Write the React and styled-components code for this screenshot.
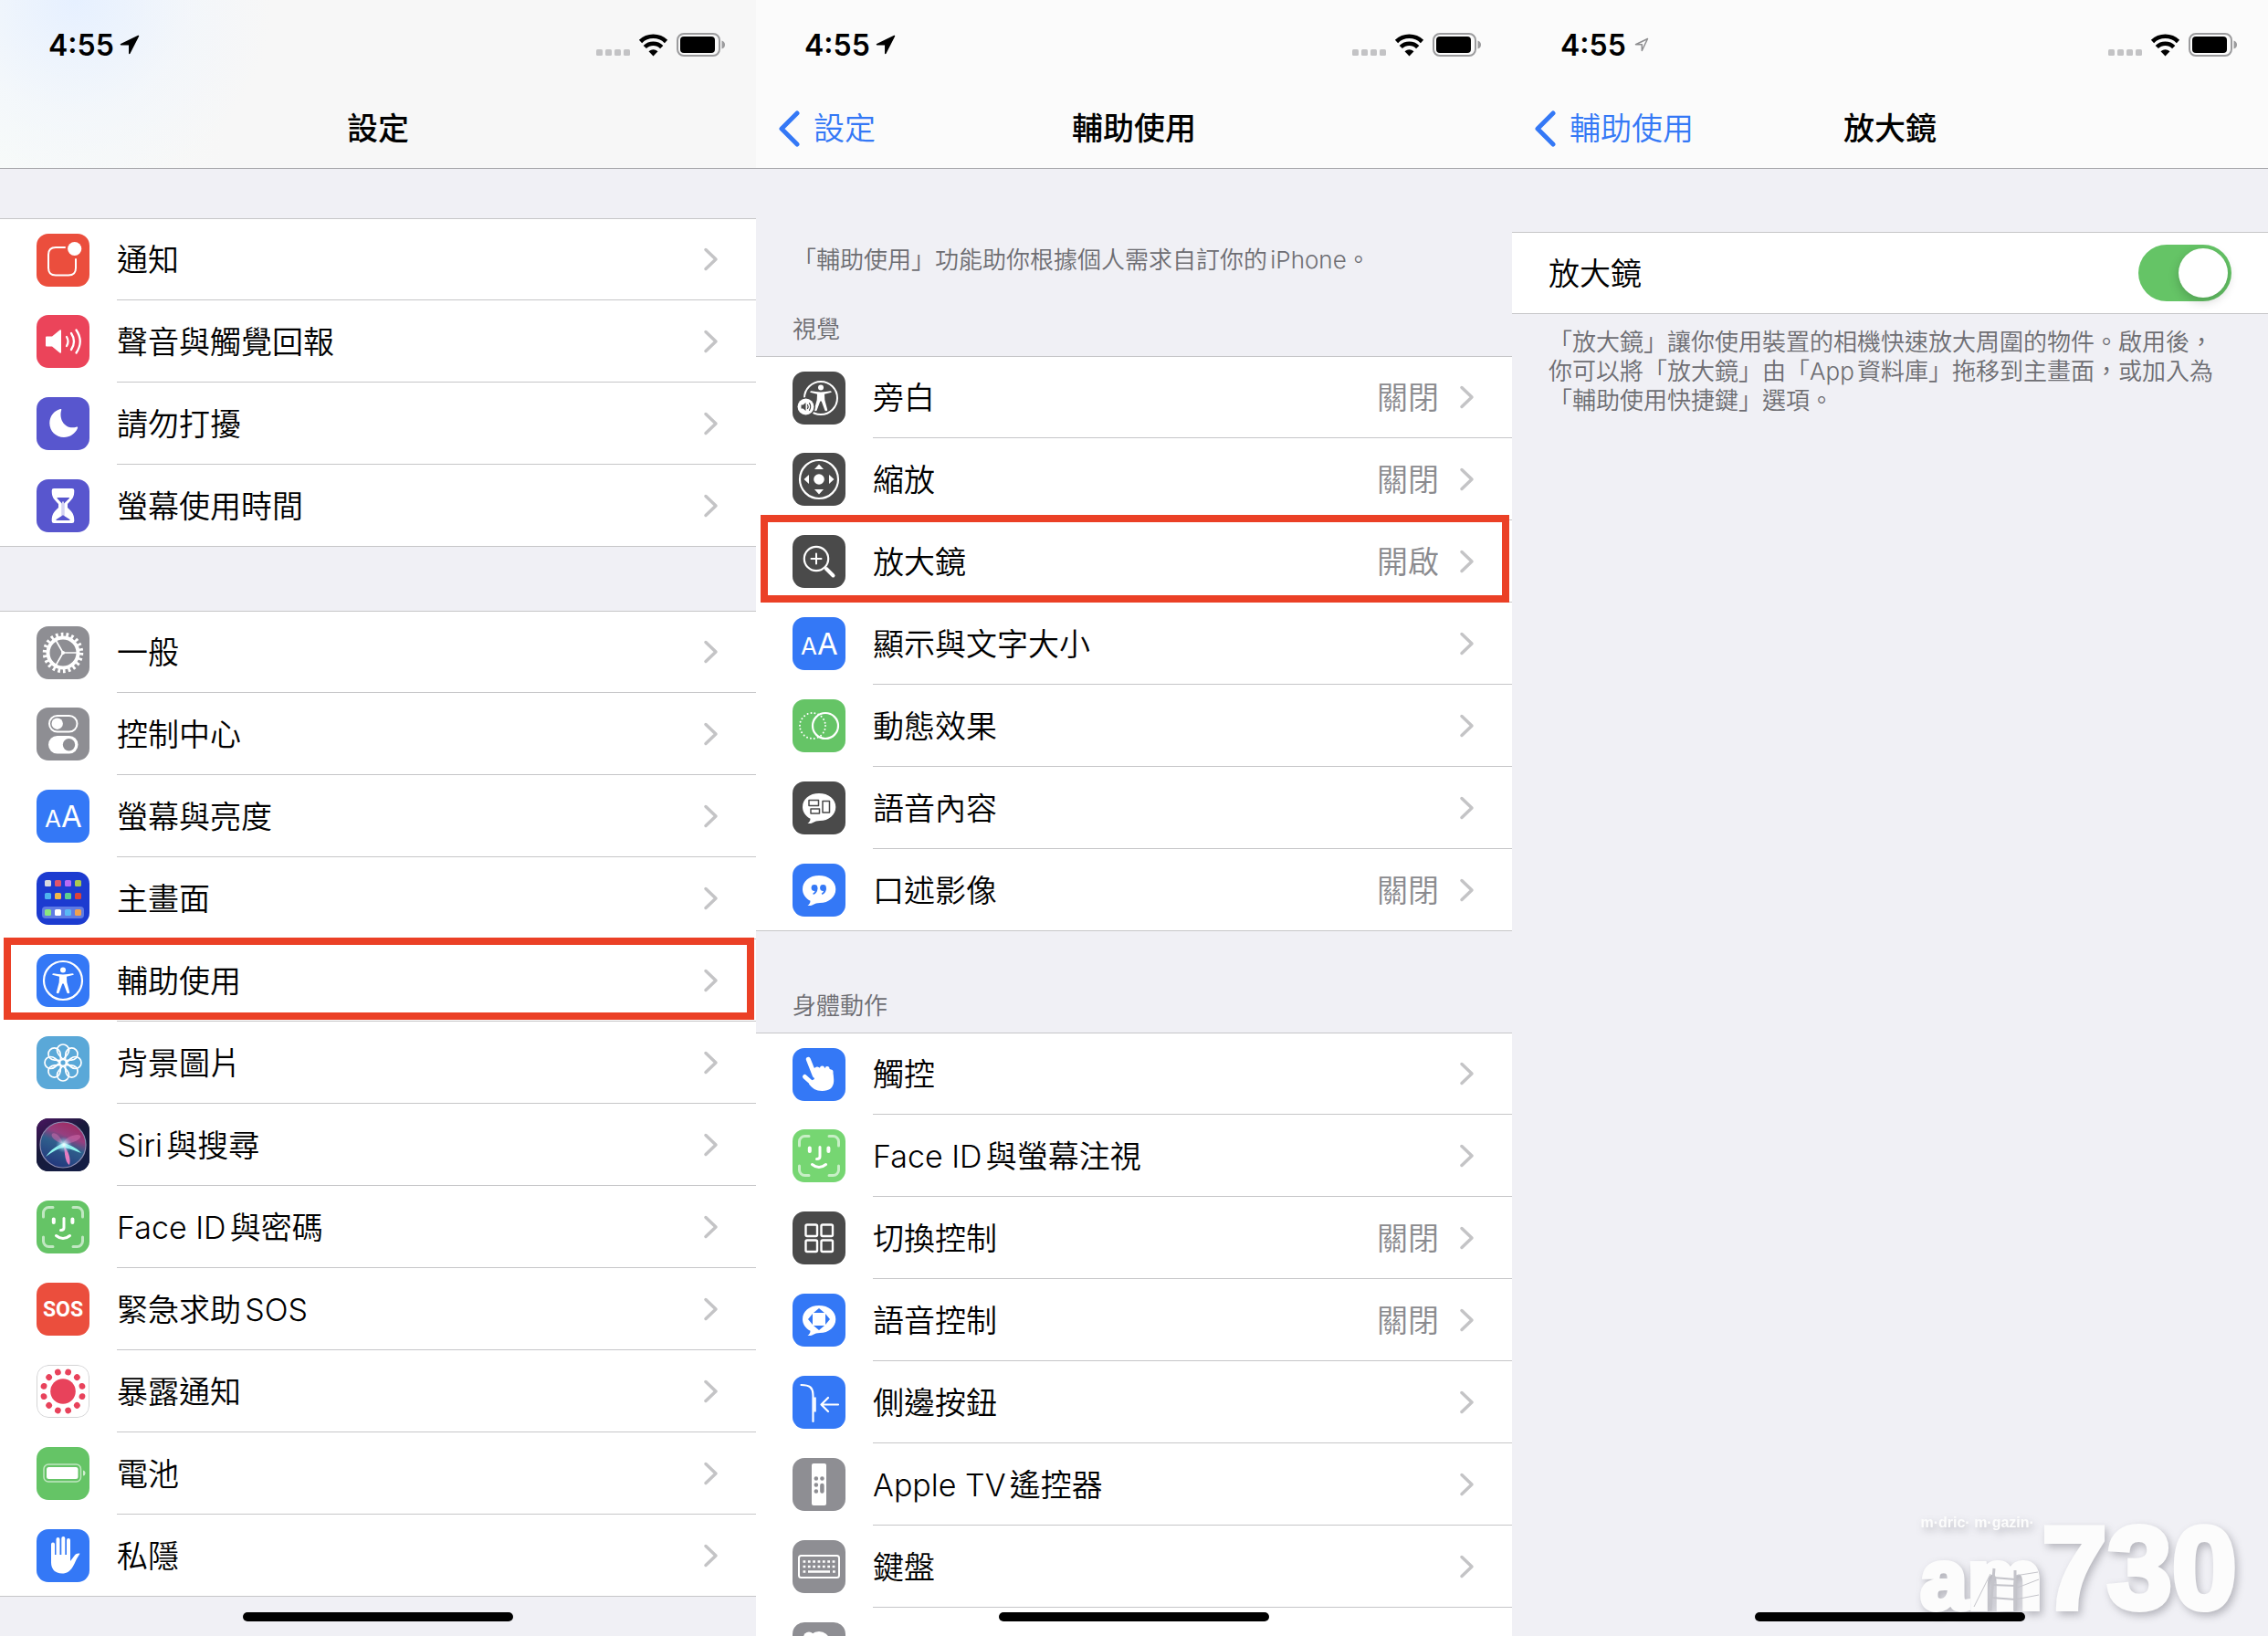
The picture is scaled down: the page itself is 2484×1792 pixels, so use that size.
import { useState } from 'react';
import styled, { createGlobalStyle } from 'styled-components';

const GlobalStyle = createGlobalStyle`
  * {
    box-sizing: border-box;
  }
  body {
    margin: 0;
    background: #f0f0f5;
    font-family: Inter, 'Noto Sans CJK TC', sans-serif;
    font-size: 34px;
    font-weight: 350;
    color: #000;
    text-autospace: normal;
  }
`;

const Screens = styled.main`
  display: grid;
  grid-template-columns: repeat(3, minmax(0, 1fr));
  height: 100vh;
`;

const Screen = styled.section`
  position: relative;
  overflow: hidden;
  background: #f0f0f5;
`;

const Header = styled.header`
  border-bottom: 1px solid #a6a6aa;
  background: ${({ $tinted }) =>
    $tinted
      ? 'radial-gradient(circle at 10% 0, #e6f0ff 0, rgba(240, 245, 252, 0.6) 16%, transparent 28%), linear-gradient(90deg, #f8fbf9, #f7f7f7 30%)'
      : '#fbfbfb'};
`;

const StatusBar = styled.div`
  display: flex;
  align-items: center;
  justify-content: space-between;
  height: 98px;
  padding: 0 33px 0 53px;
`;

const StatusGroup = styled.div`
  display: flex;
  align-items: center;
  gap: ${({ $gap }) => $gap}px;
`;

const Time = styled.time`
  font-size: 32px;
  font-weight: 600;
`;

const NavBar = styled.nav`
  display: grid;
  grid-template-columns: 1fr auto 1fr;
  align-items: center;
  height: 86px;
  padding: 0 24px;
`;

const BackLink = styled.a`
  display: flex;
  align-items: center;
  gap: 13px;
  height: 48px;
  line-height: 46px;
  color: #3478f6;
  text-decoration: none;
`;

const Title = styled.h1`
  grid-column: 2;
  margin: 0;
  font-size: 34px;
  font-weight: 500;
  line-height: 48px;
`;

const Note = styled.p`
  margin: 0;
  padding: ${({ $top }) => $top}px 40px 0;
  font-size: 26px;
  line-height: 32px;
  color: #6d6d72;
`;

const GroupTitle = styled.h2`
  margin: 0;
  padding: ${({ $top }) => $top}px 40px 13px;
  font-size: 26px;
  font-weight: 350;
  line-height: 32px;
  color: #6d6d72;
`;

const List = styled.ul`
  margin: ${({ $top }) => $top || 0}px 0 0;
  padding: 0;
  list-style: none;
  background: #fff;
  border-top: 1px solid #c6c6c8;
`;

const Item = styled.li`
  position: relative;
  height: 90px;

  &:first-child {
    height: 89px;
  }
  &:last-child {
    border-bottom: 1px solid #c6c6c8;
  }
`;

const RowLink = styled.a`
  display: flex;
  align-items: center;
  height: 100%;
  padding-left: 40px;
  color: inherit;
  text-decoration: none;
`;

const Tile = styled.svg`
  flex: none;
  width: 58px;
  height: 58px;
  margin-right: 30px;
  border-radius: 13px;
  background: ${({ $bg }) => $bg};
  fill: none;
  stroke-linecap: round;
  stroke-linejoin: round;
`;

const RowBody = styled.div`
  display: flex;
  flex: 1;
  align-items: center;
  height: 100%;
  padding-right: 41px;
  border-bottom: 1px solid #c6c6c8;

  ${Item}:last-child & {
    border-bottom: 0;
  }
`;

const RowLabel = styled.span`
  flex: 1;
  padding-top: 2px;
  line-height: 48px;
`;

const RowValue = styled.span`
  margin-right: 22px;
  padding-top: 2px;
  line-height: 48px;
  color: #8a8a8e;
`;

// hand-drawn style frame laid over the row to tap
const Marker = styled.span`
  position: absolute;
  inset: ${({ $wide }) => ($wide ? '-6px 3px 0 5px' : '-2px 2px 2px 4px')};
  z-index: 1;
  border: 8px solid #eb4026;
  pointer-events: none;
`;

const SwitchRow = styled.div`
  display: flex;
  align-items: center;
  justify-content: space-between;
  height: 90px;
  margin-top: 69px;
  padding: 0 40px;
  line-height: 48px;
  background: #fff;
  border: solid #c6c6c8;
  border-width: 1px 0;
`;

const SwitchLabel = styled.label`
  padding-top: 2px;
`;

const Switch = styled.input`
  appearance: none;
  width: 102px;
  height: 62px;
  margin: 0;
  padding: 4px;
  border-radius: 31px;
  background: ${({ checked }) => (checked ? '#65c466' : '#e9e9eb')};
  cursor: pointer;

  &::before {
    content: '';
    display: block;
    width: 54px;
    height: 54px;
    margin-left: ${({ checked }) => (checked ? '40px' : '0')};
    border-radius: 50%;
    background: #fff;
    box-shadow: 0 4px 12px rgba(0, 0, 0, 0.2);
  }
`;

const HomeIndicator = styled.span`
  position: absolute;
  left: 50%;
  bottom: 16px;
  width: 296px;
  height: 10px;
  margin-left: -148px;
  border-radius: 5px;
  background: #000;
`;

const Watermark = styled.div`
  position: absolute;
  right: 34px;
  bottom: 10px;
  display: flex;
  align-items: last baseline;
  font-family: 'Liberation Sans', sans-serif;
  font-weight: 700;
  color: #fcfcfc;
  -webkit-text-stroke: 6px #fcfcfc;
  filter: drop-shadow(3px 4px 4px rgba(60, 60, 70, 0.32));
`;

const WatermarkName = styled.div`
  position: relative;
  display: flex;
  flex-direction: column;
  font-size: 92px;
  line-height: 104px;
`;

const WatermarkNumber = styled.div`
  font-size: 128px;
  line-height: 128px;
`;

const Tagline = styled.small`
  font-size: 16px;
  line-height: 20px;
  white-space: nowrap;
  -webkit-text-stroke: 0;
`;

const Ladder = styled.svg`
  position: absolute;
  left: 51px;
  bottom: 18px;
  width: 82px;
  height: 52px;
  fill: none;
  stroke: #c4c4ca;
`;

const faceId = (
  <g stroke="#fff">
    <g strokeWidth="3" opacity=".6">
      <path d="M7.500 18v-4.500a6 6 0 0 1 6-6H18M40 7.500h4.500a6 6 0 0 1 6 6V18M50.500 40v4.500a6 6 0 0 1-6 6H40M18 50.500h-4.500a6 6 0 0 1-6-6V40" />
    </g>
    <path strokeWidth="4" d="M18.800 20.500v3.500M39.400 20.500v3.500" />
    <path strokeWidth="3" d="M30 19.500v10.500q0 2.500-3.500 2.500M21.500 38.500q7.500 6 15 0" />
  </g>
);

const textSize = (
  <g fill="#fff" fontFamily="Inter, sans-serif" fontWeight="400">
    <text x="9" y="41" fontSize="26">A</text>
    <text x="27" y="41" fontSize="33">A</text>
  </g>
);

const person = (
  <g fill="#fff">
    <circle cx="29" cy="17.500" r="3" />
    <path d="M18.500 21.300q10.500 2.200 21 0 1.500 0 1.200 1.500l-7.700 2 .3 6.200 3 11.300q-1.200 1.600-2.800.5L29.700 32.500h-1.400l-3.800 10.300q-1.600 1.100-2.800-.5l3-11.300.3-6.200-7.700-2q-.3-1.500 1.200-1.500z" />
  </g>
);

const bubble = (
  <path
    fill="#fff"
    d="M29 13c10.500 0 18.300 6.300 18.300 15S39.500 43 30 43c-3.500 0-5 .8-8 2.200-1.700.8-3.500 1-5.500.8 1.800-1.200 3-2.800 3-5.200C14.500 38 11 33.500 11 28c0-8.700 7.500-15 18-15z"
  />
);

const homeColors = [
  ['#d9d9de', '#e0556b', '#b66bf5', '#a9c94f'],
  ['#4fb3ee', '#f2b84a', '#5fd08f', '#dd4338'],
  ['#8be67f', '#ffffff', '#5ab9f5', '#f0a04e'],
];

const glyphs = {
  notifications: (
    <>
      <path
        stroke="#fff"
        strokeWidth="2"
        d="M31 15H21q-8 0-8 8v14.500q0 8 8 8h14q8 0 8-8V28"
      />
      <circle cx="41.700" cy="16.500" r="7.600" fill="#fff" />
    </>
  ),
  sound: (
    <>
      <path fill="#fff" d="M11 23.500h6l8.500-7q1.500-1 1.500.8v23.400q0 1.800-1.500.8l-8.500-7h-6q-1 0-1-1v-9q0-1 1-1z" />
      <path stroke="#fff" strokeWidth="2.300" d="M33 24q3 5 0 10M38 20q6 9 0 18M43.500 16.500q8.500 12.500 0 25" />
    </>
  ),
  moon: (
    <path
      fill="#fff"
      d="M26 13c1-.3 1.500.3 1.200 1.200C24 25 32 36 43.500 32.700c1.300-.4 2 .2 1.500 1.300C42.500 40 36.500 44 30 44c-9 0-15.700-7-15.700-15.500C14.300 21 19 15 26 13z"
    />
  ),
  hourglass: (
    <>
      <path
        fill="#fff"
        d="M19 10h20q2.300 0 2.300 2.300c0 8-2.300 9.500-7.300 14.700v4c5 5.200 7.300 6.700 7.300 14.700Q41.300 48 39 48H19q-2.300 0-2.300-2.300c0-8 2.300-9.500 7.300-14.700v-4c-5-5.200-7.300-6.700-7.300-14.700Q16.700 10 19 10z"
      />
      <path
        fill="#5856ce"
        d="M23 20h12.500q1 0 .3 1l-5.600 5.500v13.500l6.300 4q.5 1-.5 1H22q-1 0-.5-1l6.300-4V26.500L22.700 21q-.7-1 .3-1z"
      />
      <path stroke="#fff" strokeWidth="1.500" d="M29 25v14" />
    </>
  ),
  gear: (
    <g stroke="#fff" strokeLinecap="butt">
      <circle cx="29" cy="29" r="16.500" strokeWidth="4" />
      <circle cx="29" cy="29" r="20" strokeWidth="4.500" strokeDasharray="2.700 3.010" />
      <path strokeWidth="1.700" d="M29 29h15M29 29l-8-14M29 29l-8 14" />
      <circle cx="29" cy="29" r="2" fill="#fff" stroke="none" />
    </g>
  ),
  toggles: (
    <>
      <rect x="14" y="9" width="30.500" height="17.500" rx="8.700" stroke="#fff" strokeWidth="2" />
      <circle cx="22.700" cy="17.700" r="6.200" fill="#fff" />
      <rect x="13" y="31" width="32.500" height="19.500" rx="9.700" fill="#fff" />
      <circle cx="35.500" cy="40.700" r="6.700" fill="#8e8e93" />
    </>
  ),
  textSize,
  home: (
    <>
      <rect x="6" y="38" width="46" height="13" rx="4" fill="#5f7be4" />
      {homeColors.map((row, r) =>
        row.map((color, c) => (
          <rect key={c} x={9 + c * 11} y={[9, 23, 41][r]} width="7" height="7" rx="1.500" fill={color} />
        ))
      )}
    </>
  ),
  accessibility: (
    <>
      <circle cx="29" cy="29" r="21" stroke="#fff" strokeWidth="2.200" />
      {person}
    </>
  ),
  flower: (
    <g stroke="#fff" strokeWidth="1.700">
      {[0, 45, 90, 135, 180, 225, 270, 315].map((a) => (
        <path
          key={a}
          transform={`rotate(${a} 29 29)`}
          d="M29 25.500L24.500 20.500C22.500 18 22.500 16.500 22.500 15.500a6.500 6.500 0 0 1 13 0c0 1 0 2.500-2 5z"
        />
      ))}
      <circle cx="29" cy="29" r="3.500" />
    </g>
  ),
  siri: (
    <>
      <defs>
        <linearGradient id="siriBack" x1="0" y1="0" x2=".6" y2="1">
          <stop offset="0" stopColor="#4a1560" />
          <stop offset=".5" stopColor="#171a3a" />
          <stop offset="1" stopColor="#141d44" />
        </linearGradient>
        <linearGradient id="siriOrb" x1=".7" y1="0" x2=".3" y2="1">
          <stop offset="0" stopColor="#a02a60" />
          <stop offset=".3" stopColor="#963f80" />
          <stop offset=".5" stopColor="#2f5f8c" />
          <stop offset="1" stopColor="#22357c" />
        </linearGradient>
        <radialGradient id="siriGlow">
          <stop offset="0" stopColor="#fff" />
          <stop offset=".4" stopColor="#b8f4ff" stopOpacity=".6" />
          <stop offset="1" stopColor="#7ad" stopOpacity="0" />
        </radialGradient>
      </defs>
      <rect width="58" height="58" fill="url(#siriBack)" />
      <circle cx="29" cy="29" r="25" fill="url(#siriOrb)" stroke="#8f8fb4" strokeWidth="1.200" />
      <path fill="#d56fb0" opacity=".5" d="M29 28C20 25 15 20 17 17s10 2 12 11c2-9 17-12 19-9s-8 9-19 9z" />
      <path fill="#8ff3ee" d="M10 42c6-8 12-12 20-15 6 2 14 5 19 11-8-3-13-5-19-6-7 1-13 5-20 10z" />
      <path fill="#e67cc0" d="M30 30c5 6 8 14 6 21-5-3-5-13-6-21z" />
      <circle cx="30" cy="29" r="9" fill="url(#siriGlow)" />
    </>
  ),
  faceId,
  sos: (
    <text x="29" y="37" fill="#fff" fontFamily="Roboto, sans-serif" fontSize="23" fontWeight="700" textAnchor="middle">
      SOS
    </text>
  ),
  exposure: (
    <g fill="#e8425b">
      <rect x=".5" y=".5" width="57" height="57" rx="12.500" fill="#fff" stroke="#d4d4d6" />
      <circle cx="29" cy="29" r="13.800" />
      {[...Array(12)].map((_, i) => (
        <circle key={i} cx="29" cy="7.300" r="3.400" transform={`rotate(${15 + i * 30} 29 29)`} />
      ))}
    </g>
  ),
  battery: (
    <>
      <rect x="8" y="19" width="40.500" height="19" rx="5" stroke="#fff" strokeWidth="1.500" opacity=".6" />
      <rect x="11" y="22" width="34.500" height="13" rx="2.500" fill="#fff" />
      <path fill="#fff" opacity=".7" d="M51 25.500q2.500.5 2.500 3t-2.500 3z" />
    </>
  ),
  hand: (
    <>
      <path stroke="#fff" strokeWidth="4" d="M18 16.500V32M23.500 11v20M29.300 10v20M35 12v20" />
      <path
        fill="#fff"
        d="M16 28h21v7l4.500-6c1.800-2.400 4-2.800 6-2.300L44 32.500c-1.800 3.500-2.500 6-4.500 9-3 4.800-6 7-11.500 7-8 0-12-5-12-12z"
      />
    </>
  ),
  voiceOver: (
    <>
      <circle cx="31" cy="29" r="18" stroke="#fff" strokeWidth="2" />
      <g transform="translate(2 0)">{person}</g>
      <circle cx="14.500" cy="38.500" r="10.500" fill="#4a4a4a" />
      <circle cx="14.500" cy="38.500" r="9" fill="#fff" />
      <path fill="#4a4a4a" d="M9.500 36.500h2l3-2.500v9l-3-2.500h-2z" />
      <path stroke="#4a4a4a" strokeWidth="1.200" d="M16.500 36.500q1.200 2 0 4M18.500 34.700q2.500 3.800 0 7.600" />
    </>
  ),
  zoom: (
    <>
      <circle cx="29" cy="29" r="21" stroke="#fff" strokeWidth="2.200" />
      <circle cx="29" cy="29" r="5.800" fill="#fff" />
      <path fill="#fff" d="M29 12.500l5 5.500H24zM29 45.500l5-5.500H24zM12.500 29l5.500-5v10zM45.500 29L40 24v10z" />
    </>
  ),
  magnifier: (
    <g stroke="#fff">
      <circle cx="26" cy="26" r="13.200" strokeWidth="2.200" />
      <path strokeWidth="2" d="M26 20.500v11M20.500 26h11" />
      <path strokeWidth="4" d="M37 37l7.500 7.500" />
    </g>
  ),
  motion: (
    <g stroke="#fff">
      <circle cx="36" cy="29" r="14" strokeWidth="2.200" />
      <circle cx="22" cy="29" r="14" strokeWidth="2" strokeDasharray="0 4" />
    </g>
  ),
  speech: (
    <>
      {bubble}
      <path stroke="#4a4a4a" strokeWidth="1.500" d="M18 20.500h10.500v6H18zM20 30h9.500v5H20zM33 21.500h7.500V34H33z" />
    </>
  ),
  quote: (
    <>
      {bubble}
      <g fill="#3478f6">
        <circle cx="24" cy="26.500" r="3.400" />
        <path d="M27.400 26.500q.3 5.500-4.400 7.500l-.8-1.300q2.700-1.500 2.500-4z" />
        <circle cx="33.500" cy="26.500" r="3.400" />
        <path d="M36.900 26.500q.3 5.500-4.400 7.500l-.8-1.300q2.700-1.500 2.500-4z" />
      </g>
    </>
  ),
  touch: (
    <>
      <path stroke="#fff" strokeWidth="5" d="M17.300 12.300l7 17.700M13.500 31.500l9 8M27 23v6M32.500 22v6M38 22.500v6M42 26v6" />
      <path
        fill="#fff"
        d="M20.500 22l6-.5q9-.5 14.500 1.500c3 2.500 4.500 8 4.200 13.500-.4 7-5 10.500-12.700 10.500-7 0-11-3-14.500-7.500L20 36l4-2z"
      />
    </>
  ),
  switches: (
    <g stroke="#fff" strokeWidth="2.400">
      <rect x="14.500" y="14.500" width="12.500" height="12.500" rx="1.500" />
      <rect x="31.500" y="14.500" width="12.500" height="12.500" rx="1.500" />
      <rect x="14.500" y="31.500" width="12.500" height="12.500" rx="1.500" />
      <rect x="31.500" y="31.500" width="12.500" height="12.500" rx="1.500" />
    </g>
  ),
  voiceControl: (
    <>
      {bubble}
      <g fill="#3478f6">
        <path d="M29 16l6 5H23zM29 40l6-5H23zM17 28l5-6v12zM41 28l-5-6v12z" />
      </g>
    </>
  ),
  sideButton: (
    <>
      <path stroke="#fff" strokeWidth="2.200" d="M9.500 10c9 0 13 2.500 13 12v28M50 31.500H31.500M39 24l-7.500 7.500L39 39" />
      <path stroke="#fff" strokeWidth="2.500" strokeLinecap="butt" d="M24.500 23.500v16" />
    </>
  ),
  remote: (
    <>
      <rect x="21" y="6" width="16" height="46" rx="2" fill="#fff" />
      <path stroke="#8e8e93" strokeWidth="4.500" d="M25.800 22.500h.1M32.400 22.500h.1M25.800 29.500h.1M25.800 36.500h.1M32.400 30v6.500" />
    </>
  ),
  keyboard: (
    <>
      <rect x="7" y="17" width="44" height="24" rx="2.500" stroke="#fff" strokeWidth="2" />
      <g stroke="#fff" strokeWidth="2.500" strokeLinecap="butt">
        <path strokeDasharray="2.800 2.550" d="M11.500 23.500h35.500M11.500 29h35.500" />
        <path d="M11.500 34.500h2.800M17 34.500h24M44 34.500h2.800" />
      </g>
    </>
  ),
  airpods: (
    <>
      <circle cx="18" cy="16.500" r="6" fill="#fff" />
      <ellipse cx="29" cy="19" rx="11" ry="9" fill="#fff" />
    </>
  ),
};

const general = [
  { icon: 'notifications', bg: '#eb4e3d', label: '通知' },
  { icon: 'sound', bg: '#eb445a', label: '聲音與觸覺回報' },
  { icon: 'moon', bg: '#5856ce', label: '請勿打擾' },
  { icon: 'hourglass', bg: '#5856ce', label: '螢幕使用時間' },
];

const system = [
  { icon: 'gear', bg: '#8e8e93', label: '一般' },
  { icon: 'toggles', bg: '#8e8e93', label: '控制中心' },
  { icon: 'textSize', bg: '#3478f6', label: '螢幕與亮度' },
  { icon: 'home', bg: '#1c3bd0', label: '主畫面' },
  { icon: 'accessibility', bg: '#3478f6', label: '輔助使用', marked: true },
  { icon: 'flower', bg: '#5aa8d8', label: '背景圖片' },
  { icon: 'siri', bg: '#171a3a', label: 'Siri與搜尋' },
  { icon: 'faceId', bg: '#65c466', label: 'Face ID與密碼' },
  { icon: 'sos', bg: '#eb4e3d', label: '緊急求助SOS' },
  { icon: 'exposure', bg: '#fff', label: '暴露通知' },
  { icon: 'battery', bg: '#65c466', label: '電池' },
  { icon: 'hand', bg: '#3478f6', label: '私隱' },
];

const vision = [
  { icon: 'voiceOver', bg: '#4a4a4a', label: '旁白', value: '關閉' },
  { icon: 'zoom', bg: '#4a4a4a', label: '縮放', value: '關閉' },
  { icon: 'magnifier', bg: '#4a4a4a', label: '放大鏡', value: '開啟', marked: true },
  { icon: 'textSize', bg: '#3478f6', label: '顯示與文字大小' },
  { icon: 'motion', bg: '#65c466', label: '動態效果' },
  { icon: 'speech', bg: '#4a4a4a', label: '語音內容' },
  { icon: 'quote', bg: '#3478f6', label: '口述影像', value: '關閉' },
];

const motor = [
  { icon: 'touch', bg: '#3478f6', label: '觸控' },
  { icon: 'faceId', bg: '#76d672', label: 'Face ID與螢幕注視' },
  { icon: 'switches', bg: '#4a4a4a', label: '切換控制', value: '關閉' },
  { icon: 'voiceControl', bg: '#3478f6', label: '語音控制', value: '關閉' },
  { icon: 'sideButton', bg: '#3478f6', label: '側邊按鈕' },
  { icon: 'remote', bg: '#8e8e93', label: 'Apple TV遙控器' },
  { icon: 'keyboard', bg: '#8e8e93', label: '鍵盤' },
  { icon: 'airpods', bg: '#8e8e93', label: '' },
];

function StatusIcons() {
  return (
    <svg width="80" height="26" viewBox="0 0 80 26">
      <g fill="#c3c3c5">
        <rect x="0" y="18" width="7" height="7" rx="1.500" />
        <rect x="10" y="18" width="7" height="7" rx="1.500" />
        <rect x="20" y="18" width="7" height="7" rx="1.500" />
        <rect x="30" y="18" width="7" height="7" rx="1.500" />
      </g>
      <g fill="none" stroke="#000" strokeWidth="4.600">
        <path d="M48.500 9.500a20 20 0 0 1 28 0" />
        <path d="M53.300 15.500a13 13 0 0 1 18.400 0" />
      </g>
      <path d="M62.500 25.500l-5-5.200q5-4 10 0z" />
    </svg>
  );
}

function BatteryIcon() {
  return (
    <svg width="54" height="26" viewBox="0 0 54 26">
      <rect x="1" y="1" width="46" height="24" rx="7" fill="none" stroke="#9b9b9d" strokeWidth="2" />
      <rect x="4" y="4" width="38" height="18" rx="4" />
      <path d="M49.500 8.500q3.500 1 3.500 4.500t-3.500 4.500z" fill="#9b9b9d" />
    </svg>
  );
}

function PhoneHeader({ title, back, tinted, locationIdle }) {
  return (
    <Header $tinted={tinted}>
      <StatusBar>
        <StatusGroup $gap={6}>
          <Time>4:55</Time>
          <svg width="22" height="22" viewBox="0 0 22 22">
            {locationIdle ? (
              <path d="M17.500 4.500L4.500 10.700h6.800v6.800z" fill="none" stroke="#8e8e90" strokeWidth="1.500" strokeLinejoin="round" />
            ) : (
              <path d="M20.500 1.500L1.500 10.700h9.300v9.800z" stroke="#000" strokeWidth="1.500" strokeLinejoin="round" />
            )}
          </svg>
        </StatusGroup>
        <StatusGroup $gap={8}>
          <StatusIcons />
          <BatteryIcon />
        </StatusGroup>
      </StatusBar>
      <NavBar>
        {back && (
          <BackLink href="#back">
            <svg width="26" height="40" viewBox="0 0 26 40">
              <path d="M21 3L4 20l17 17" fill="none" stroke="#3478f6" strokeWidth="5" strokeLinecap="round" strokeLinejoin="round" />
            </svg>
            {back}
          </BackLink>
        )}
        <Title>{title}</Title>
      </NavBar>
    </Header>
  );
}

function SettingsList({ items, top, wideMarker }) {
  return (
    <List $top={top}>
      {items.map((item) => (
        <Item key={item.icon}>
          <RowLink href={`#${item.icon}`}>
            <Tile viewBox="0 0 58 58" $bg={item.bg}>
              {glyphs[item.icon]}
            </Tile>
            <RowBody>
              <RowLabel>{item.label}</RowLabel>
              {item.value && <RowValue>{item.value}</RowValue>}
              <svg width="17" height="26" viewBox="0 0 17 26">
                <path d="M3 2.500L14 13 3 23.500" fill="none" stroke="#c4c4c6" strokeWidth="3.500" strokeLinecap="round" strokeLinejoin="round" />
              </svg>
            </RowBody>
          </RowLink>
          {item.marked && <Marker $wide={wideMarker} />}
        </Item>
      ))}
    </List>
  );
}

function App() {
  const [magnifier, setMagnifier] = useState(true);

  return (
    <>
      <GlobalStyle />
      <Screens lang="zh-Hant">
        <Screen>
          <PhoneHeader title="設定" tinted />
          <SettingsList items={general} top={54} />
          <SettingsList items={system} top={70} />
          <HomeIndicator />
        </Screen>
        <Screen>
          <PhoneHeader title="輔助使用" back="設定" />
          <Note $top={84}>「輔助使用」功能助你根據個人需求自訂你的iPhone。</Note>
          <GroupTitle $top={44}>視覺</GroupTitle>
          <SettingsList items={vision} wideMarker />
          <GroupTitle $top={66}>身體動作</GroupTitle>
          <SettingsList items={motor} />
          <HomeIndicator />
        </Screen>
        <Screen>
          <PhoneHeader title="放大鏡" back="輔助使用" locationIdle />
          <SwitchRow>
            <SwitchLabel htmlFor="magnifier">放大鏡</SwitchLabel>
            <Switch
              id="magnifier"
              type="checkbox"
              role="switch"
              checked={magnifier}
              onChange={() => setMagnifier((prev) => !prev)}
            />
          </SwitchRow>
          <Note $top={15}>
            「放大鏡」讓你使用裝置的相機快速放大周圍的物件。啟用後，你可以將「放大鏡」由「App資料庫」拖移到主畫面，或加入為「輔助使用快捷鍵」選項。
          </Note>
          <Watermark>
            <WatermarkName>
              <Tagline>m·dric· m·gazin·</Tagline>
              <span>am</span>
              <Ladder viewBox="0 0 82 52">
                <path strokeWidth="3" d="M30 6L26 52M53 8v44" />
                <path strokeWidth="2" d="M29 16l24 2M28 24l25 1M27 38l26 2" />
                <path strokeWidth="1" d="M26 12L8 48M53 14l25-4M53 28l26-10M53 40l26-5" />
              </Ladder>
            </WatermarkName>
            <WatermarkNumber>730</WatermarkNumber>
          </Watermark>
          <HomeIndicator />
        </Screen>
      </Screens>
    </>
  );
}

export default App;
